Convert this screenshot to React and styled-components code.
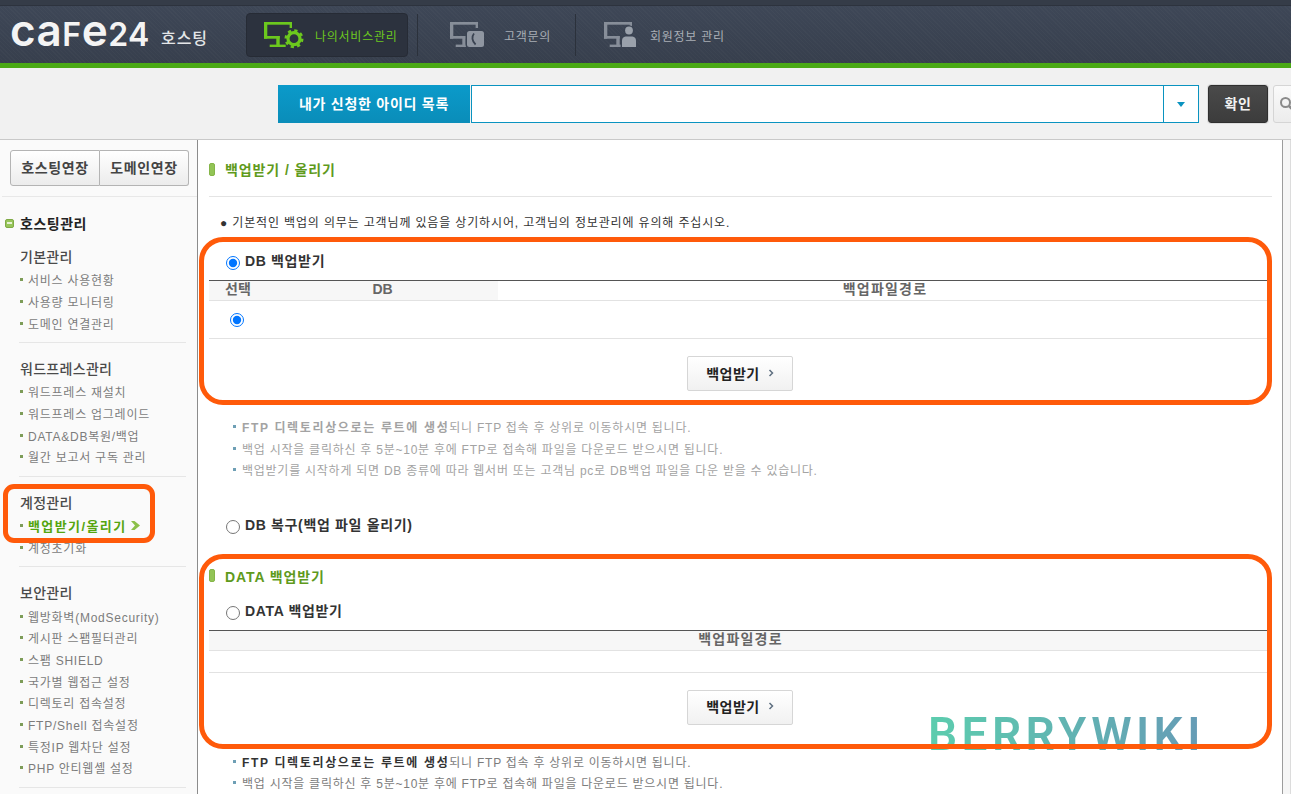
import React from 'react';
import styled, { createGlobalStyle } from 'styled-components';

const GlobalStyle = createGlobalStyle`
  html, body {
    margin: 0;
    height: 794px;
    overflow: hidden;
    background: #fff;
  }
  body {
    font-family: "Liberation Sans", "Noto Sans CJK KR", sans-serif;
    font-size: 12px;
    color: #333;
  }
  * { box-sizing: border-box; }
`;

const Page = styled.div`
  width: 1291px;
  height: 794px;
  overflow: hidden;
`;

/* top bar */
const Header = styled.header`
  display: flex;
  align-items: center;
  height: 68px;
  padding: 2px 0 0 10px;
  border-top: 5px solid #353c48;
  border-bottom: 5px solid #4aa914;
  background:
    repeating-linear-gradient(45deg, rgba(255,255,255,.018) 0 1px, transparent 1px 3px),
    linear-gradient(#3e4757, #373f4d);
  box-shadow: inset 0 1px 0 #2d333e;
`;

const Brand = styled.div`
  display: flex;
  align-items: center;
  width: 236px;
  color: #f4f4f4;
`;

const Logo = styled.span`
  font-family: Inter, sans-serif;
  font-weight: 600;
  font-size: 44px;
  line-height: 44px;
  letter-spacing: .5px;
  margin-top: -5px;
`;

const LogoCap = styled.span`
  font-size: 32px;
`;

const BrandSub = styled.span`
  margin: 3px 0 0 11px;
  font-size: 16px;
  font-weight: 500;
  letter-spacing: 1px;
  color: #e4e6e8;
`;

const NavItem = styled.a`
  display: flex;
  align-items: center;
  flex: none;
  width: ${p => p.$width}px;
  height: 44px;
  padding-left: ${p => p.$pad}px;
  gap: ${p => p.$gap}px;
  font-size: 12px;
  letter-spacing: .75px;
  color: ${p => (p.$active ? '#6cc81e' : '#a9aeb5')};
  ${p => p.$active && `
    background: #2c323e;
    border: 1px solid #262b35;
    border-radius: 4px;
  `}
`;

const NavSep = styled.div`
  flex: none;
  width: 1px;
  height: 42px;
  margin-left: ${p => p.$left || 0}px;
  background: #2b313b;
`;

const Monitor = ({ color }) => (
  <>
    <rect x="0" y="0" width="28" height="2.7" fill={color} />
    <rect x="25.6" y="0" width="2.4" height="6" fill={color} />
    <rect x="0" y="0" width="3.3" height="16.7" fill={color} />
    <rect x="0" y="14" width="15.7" height="2.7" fill={color} />
    <rect x="12.3" y="14" width="3.4" height="9" fill={color} />
    <rect x="5.7" y="22.6" width="16" height="2.4" fill={color} />
  </>
);

const GearIcon = () => (
  <svg width="40" height="27" viewBox="0 0 40 27">
    <Monitor color="#6cc81e" />
    <circle cx="30" cy="16.7" r="8.4" fill="#2c323e" />
    <circle cx="30" cy="16.7" r="6" fill="none" stroke="#6cc81e" strokeWidth="3.2" />
    <circle cx="30" cy="16.7" r="8.2" fill="none" stroke="#6cc81e" strokeWidth="2.6" strokeDasharray="3.2 3.24" />
  </svg>
);

const PhoneIcon = () => (
  <svg width="34" height="27" viewBox="0 0 34 27">
    <Monitor color="#878e99" />
    <rect x="15.6" y="7.6" width="19" height="18.4" rx="3" fill="#3a4352" />
    <rect x="17" y="9" width="17" height="16" rx="2.5" fill="#8f96a1" />
    <path d="M24 11.5c-2.4 3-2.2 7.5 1.6 11" fill="none" stroke="#3a4352" strokeWidth="1.8" />
  </svg>
);

const PersonIcon = () => (
  <svg width="33" height="27" viewBox="0 0 33 27">
    <Monitor color="#878e99" />
    <circle cx="25" cy="8.5" r="5.2" fill="#3a4352" />
    <rect x="16.6" y="13.6" width="17" height="12" fill="#3a4352" />
    <circle cx="25" cy="8.5" r="3.9" fill="#9aa1ab" />
    <path d="M18 25v-6.4c0-3 2.2-4.2 4.4-4.2h5.2c2.2 0 4.4 1.2 4.4 4.2V25z" fill="#9aa1ab" />
  </svg>
);

/* search band */
const SearchBand = styled.div`
  display: flex;
  align-items: stretch;
  height: 72px;
  padding: 17px 0 16px 278px;
  background: #f1f1f1;
  border-bottom: 1px solid #c9c9c9;
`;

const SearchLabel = styled.div`
  display: flex;
  align-items: center;
  justify-content: center;
  flex: none;
  width: 192px;
  padding-bottom: 2px;
  background: linear-gradient(#0b9aca, #0a8db9);
  color: #fff;
  font-size: 14px;
  font-weight: 700;
  letter-spacing: .75px;
`;

const SearchInput = styled.div`
  flex: none;
  width: 693px;
  margin-left: 1px;
  background: #fff;
  border: 1px solid #0a93c0;
`;

const SearchArrow = styled.div`
  display: flex;
  align-items: center;
  justify-content: center;
  flex: none;
  width: 35px;
  background: #fff;
  border: 1px solid #0a93c0;
  border-left: 0;
  &::after {
    content: '';
    border: 4px solid transparent;
    border-top: 5px solid #0a93c0;
    border-bottom: 0;
  }
`;

const ConfirmButton = styled.button`
  flex: none;
  width: 60px;
  margin-left: 9px;
  padding: 0 0 3px;
  background: linear-gradient(#4a4a4a, #3c3c3c);
  border: 1px solid #2f2f2f;
  border-radius: 3px;
  box-shadow: 0 0 0 1px #ddd;
  color: #f2f2f2;
  font: 700 14px "Liberation Sans", "Noto Sans CJK KR", sans-serif;
  letter-spacing: .6px;
`;

const SearchButton = styled.button`
  display: flex;
  align-items: center;
  flex: none;
  width: 50px;
  margin-left: 5px;
  padding: 0 0 0 5px;
  background: linear-gradient(#fafafa, #ececec);
  border: 1px solid #d5d5d5;
  border-radius: 3px;
`;

/* body */
const Body = styled.div`
  display: flex;
  height: 654px;
  overflow: hidden;
`;

const Sidebar = styled.aside`
  flex: none;
  width: 198px;
  background: #fafafa;
  border-right: 1px solid #8c8c8c;
`;

const RenewRow = styled.div`
  display: flex;
  height: 57px;
  margin-left: 2px;
  padding: 10px 8px 10px 8px;
  border-bottom: 1px solid #e8e8e8;
`;

const RenewButton = styled.button`
  width: ${p => p.$width}px;
  height: 36px;
  padding: 0 0 2px;
  background: linear-gradient(#fff, #ececec);
  border: 1px solid #b4b4b4;
  border-left-width: ${p => (p.$last ? 0 : 1)}px;
  border-radius: ${p => (p.$last ? '0 3px 3px 0' : '3px 0 0 3px')};
  color: #444;
  font: 700 14px "Liberation Sans", "Noto Sans CJK KR", sans-serif;
  letter-spacing: .6px;
`;

const SideHead = styled.div`
  display: flex;
  align-items: center;
  gap: 6px;
  height: 18px;
  margin: 17px 0 0 5px;
  color: #222;
  font-size: 14px;
  font-weight: 700;
  letter-spacing: .5px;
`;

const MinusIcon = styled.span`
  position: relative;
  flex: none;
  width: 9px;
  height: 9px;
  background: #97c55a;
  border: 1px solid #7faa45;
  border-radius: 2px;
  &::after {
    content: '';
    position: absolute;
    left: 1px;
    right: 1px;
    top: 2px;
    height: 2px;
    background: #e6f2d4;
  }
`;

const Group = styled.section`
  position: relative;
  margin: 0 11px 0 19px;
  padding: 13px 0 8px;
  border-bottom: 1px solid #e6e6e6;
  & + & { padding-top: 14px; }
`;

const GroupTitle = styled.h3`
  height: 24px;
  margin: 0 0 0 1px;
  color: #4a4a4a;
  font-size: 14px;
  font-weight: 500;
  line-height: 24px;
  letter-spacing: .3px;
`;

const SideList = styled.ul`
  margin: 0;
  padding: 0;
  list-style: none;
`;

const SideItem = styled.li`
  display: flex;
  align-items: center;
  height: 21.7px;
  padding-left: 1px;
  color: ${p => (p.$active ? '#55a50f' : '#7c7c7c')};
  font-weight: ${p => (p.$active ? 700 : 400)};
  font-size: ${p => (p.$active ? 13 : 12)}px;
  letter-spacing: ${p => (p.$active ? '1.4px' : '.75px')};
  &::before {
    content: '';
    flex: none;
    width: 3px;
    height: 3px;
    margin-right: 5px;
    background: #7d9c58;
  }
`;

const ActiveArrow = styled.svg`
  margin-left: 4px;
`;

const Highlight = styled.div`
  position: absolute;
  left: -16px;
  top: 7px;
  width: 152px;
  height: 59px;
  border: 5px solid #ff5a0a;
  border-radius: 11px;
`;

const Content = styled.main`
  flex: 1;
  isolation: isolate;
  background: #fff;
`;

const PageTitle = styled.div`
  display: flex;
  align-items: center;
  height: 57px;
  margin: 0 10px 0 11px;
  padding-top: 2px;
  border-bottom: 1px solid #e4e4e4;
`;

const TitleMark = styled.span`
  flex: none;
  width: 6px;
  height: 13px;
  margin-right: ${p => p.$gap}px;
  background: #92c456;
  border: 1px solid #85b548;
  border-radius: 2px;
`;

const GreenTitle = styled.h2`
  margin: 0;
  color: #5f9a1c;
  font-size: 14px;
  font-weight: 700;
  letter-spacing: .9px;
`;

const Notice = styled.p`
  height: 40px;
  margin: 0 0 0 22px;
  padding-top: 18px;
  color: #333;
  font-size: 12px;
  line-height: 17px;
  letter-spacing: .85px;
`;

const AnnotatedBox = styled.section`
  position: relative;
  width: 1073px;
  margin: ${p => p.$top || 0}px 0 0 1px;
  border: 5px solid #ff5a0a;
  border-radius: 24px;
`;

const RadioRow = styled.label`
  display: flex;
  align-items: center;
  gap: 5px;
  height: ${p => p.$height || 38}px;
  margin-top: ${p => p.$top || 0}px;
  padding: 0 0 2px ${p => p.$left || 22}px;
  color: #333;
  font-size: 14px;
  font-weight: 700;
  letter-spacing: .65px;
`;

const Radio = styled.input.attrs({ type: 'radio' })`
  flex: none;
  width: 14px;
  height: 14px;
  margin: 6px 0 0;
  accent-color: #0075ff;
`;

const RowRadio = styled(Radio)`
  margin: 0;
`;

const BoxTitle = styled.div`
  display: flex;
  align-items: center;
  height: 34px;
  padding-left: 5px;
`;

const Table = styled.div`
  margin-left: 5px;
  border-top: 1px solid #555;
`;

const TableHead = styled.div`
  display: grid;
  grid-template-columns: ${p => p.$columns};
  height: 20px;
  border-bottom: 1px solid #e2e2e2;
  color: #666;
  font-size: 14px;
  font-weight: 700;
  line-height: 17px;
  text-align: center;
`;

const HeadCell = styled.div`
  padding-left: ${p => p.$left || 0}px;
  letter-spacing: ${p => p.$spacing || 0}px;
  background: ${p => (p.$shaded ? '#f7f7f7' : '#fff')};
`;

const TableRow = styled.div`
  display: flex;
  align-items: center;
  height: ${p => p.$height}px;
  padding-left: ${p => p.$left || 0}px;
  border-bottom: 1px solid #e2e2e2;
`;

const Actions = styled.div`
  display: flex;
  justify-content: center;
  padding: 17px 0 ${p => p.$bottom}px 9px;
`;

const BackupButton = styled.button`
  display: flex;
  align-items: center;
  justify-content: center;
  gap: 8px;
  width: 106px;
  height: 35px;
  padding: 0 0 2px;
  background: linear-gradient(#fff, #f1f1f1);
  border: 1px solid #d6d6d6;
  border-radius: 2px;
  color: #222;
  font: 700 14px "Liberation Sans", "Noto Sans CJK KR", sans-serif;
  letter-spacing: .5px;
`;

const NoteList = styled.ul`
  margin: 0;
  padding: ${p => p.$top}px 0 0 35px;
  list-style: none;
  font-size: 12px;
  letter-spacing: .75px;
  color: ${p => (p.$faded ? '#a3a3a3' : '#7c7c7c')};
`;

const Note = styled.li`
  display: flex;
  align-items: center;
  height: 21.5px;
  white-space: nowrap;
  &::before {
    content: '';
    flex: none;
    width: 3px;
    height: 3px;
    margin-right: 6px;
    background: #6e9fb5;
  }
  strong {
    color: ${p => (p.$faded ? '#a3a3a3' : '#333')};
    letter-spacing: 1.65px;
  }
`;

const Watermark = styled.div`
  position: absolute;
  z-index: -1;
  left: 724px;
  top: 148px;
  font-family: Roboto, sans-serif;
  font-size: 46px;
  font-weight: 600;
  line-height: 54px;
  letter-spacing: 4.4px;
  white-space: nowrap;
  background: linear-gradient(90deg, #5ccdae, #669bb6);
  -webkit-background-clip: text;
  background-clip: text;
  color: transparent;
`;

const Rail = styled.div`
  flex: none;
  width: 9px;
  background: #f6f6f6;
  border-left: 1px solid #9c9c9c;
  border-right: 1px solid #dcdcdc;
`;

const groups = [
  { title: '기본관리', items: ['서비스 사용현황', '사용량 모니터링', '도메인 연결관리'] },
  { title: '워드프레스관리', items: ['워드프레스 재설치', '워드프레스 업그레이드', 'DATA&DB복원/백업', '월간 보고서 구독 관리'] },
  { title: '계정관리', items: ['백업받기/올리기', '계정초기화'], active: '백업받기/올리기' },
  {
    title: '보안관리',
    items: ['웹방화벽(ModSecurity)', '게시판 스팸필터관리', '스팸 SHIELD', '국가별 웹접근 설정', '디렉토리 접속설정', 'FTP/Shell 접속설정', '특정IP 웹차단 설정', 'PHP 안티웹셸 설정'],
  },
];

const Notes = ({ faded, top, full }) => (
  <NoteList $faded={faded} $top={top}>
    <Note $faded={faded}><span><strong>FTP 디렉토리상으로는 루트에 생성</strong>되니 FTP 접속 후 상위로 이동하시면 됩니다.</span></Note>
    <Note>백업 시작을 클릭하신 후 5분~10분 후에 FTP로 접속해 파일을 다운로드 받으시면 됩니다.</Note>
    {full && <Note>백업받기를 시작하게 되면 DB 종류에 따라 웹서버 또는 고객님 pc로 DB백업 파일을 다운 받을 수 있습니다.</Note>}
  </NoteList>
);

const Backup = ({ bottom }) => (
  <Actions $bottom={bottom}>
    <BackupButton>
      백업받기
      <svg width="6" height="8" viewBox="0 0 6 8">
        <path d="M1.5 1l3 3-3 3" fill="none" stroke="#5f6f80" strokeWidth="1.5" />
      </svg>
    </BackupButton>
  </Actions>
);

export default function App() {
  return (
    <Page>
      <GlobalStyle />
      <Header>
        <Brand>
          <Logo>ca<LogoCap>F</LogoCap>e<LogoCap>24</LogoCap></Logo>
          <BrandSub>호스팅</BrandSub>
        </Brand>
        <NavItem $active $width={162} $pad={17} $gap={11}><GearIcon />나의서비스관리</NavItem>
        <NavSep $left={9} />
        <NavItem $width={157} $pad={32} $gap={20}><PhoneIcon />고객문의</NavItem>
        <NavSep />
        <NavItem $width={200} $pad={28} $gap={13}><PersonIcon />회원정보 관리</NavItem>
      </Header>

      <SearchBand>
        <SearchLabel>내가 신청한 아이디 목록</SearchLabel>
        <SearchInput />
        <SearchArrow />
        <ConfirmButton>확인</ConfirmButton>
        <SearchButton>
          <svg width="16" height="16" viewBox="0 0 16 16">
            <circle cx="6.5" cy="6.5" r="4.5" fill="none" stroke="#8a8a8a" strokeWidth="2" />
            <path d="M10 10l5 5" stroke="#8a8a8a" strokeWidth="2.5" />
          </svg>
        </SearchButton>
      </SearchBand>

      <Body>
        <Sidebar>
          <RenewRow>
            <RenewButton $width={90}>호스팅연장</RenewButton>
            <RenewButton $last $width={89}>도메인연장</RenewButton>
          </RenewRow>
          <SideHead><MinusIcon />호스팅관리</SideHead>
          {groups.map(group => (
            <Group key={group.title}>
              <GroupTitle>{group.title}</GroupTitle>
              <SideList>
                {group.items.map(item => (
                  <SideItem key={item} $active={item === group.active}>
                    {item}
                    {item === group.active && (
                      <ActiveArrow width="9" height="9" viewBox="0 0 9 9">
                        <path d="M0 0h3.5L9 4.5 3.5 9H0l4-4.5z" fill="#8cc04a" />
                      </ActiveArrow>
                    )}
                  </SideItem>
                ))}
              </SideList>
              {group.active && <Highlight />}
            </Group>
          ))}
        </Sidebar>

        <Content>
          <PageTitle>
            <TitleMark $gap={10} />
            <GreenTitle>백업받기 / 올리기</GreenTitle>
          </PageTitle>
          <Notice>● 기본적인 백업의 의무는 고객님께 있음을 상기하시어, 고객님의 정보관리에 유의해 주십시오.</Notice>

          <AnnotatedBox>
            <RadioRow>
              <Radio name="mode" defaultChecked />
              DB 백업받기
            </RadioRow>
            <Table>
              <TableHead $columns="58px 231px 1fr">
                <HeadCell $shaded>선택</HeadCell>
                <HeadCell $shaded>DB</HeadCell>
                <HeadCell $left={5} $spacing={1.2}>백업파일경로</HeadCell>
              </TableHead>
              <TableRow $height={38} $left={21}>
                <RowRadio name="db" defaultChecked />
              </TableRow>
            </Table>
            <Backup bottom={9} />
          </AnnotatedBox>

          <Notes faded full top={11} />

          <RadioRow $top={25} $left={28}>
            <Radio name="mode" />
            DB 복구(백업 파일 올리기)
          </RadioRow>

          <AnnotatedBox $top={10}>
            <BoxTitle>
              <TitleMark $gap={10} />
              <GreenTitle>DATA 백업받기</GreenTitle>
            </BoxTitle>
            <RadioRow $height={37}>
              <Radio name="mode" />
              DATA 백업받기
            </RadioRow>
            <Table>
              <TableHead $columns="1fr">
                <HeadCell $shaded $left={5} $spacing={1.2}>백업파일경로</HeadCell>
              </TableHead>
              <TableRow $height={22} />
            </Table>
            <Backup bottom={19} />
            <Watermark>BERRYWIKI</Watermark>
          </AnnotatedBox>

          <Notes top={2} />
        </Content>
        <Rail />
      </Body>
    </Page>
  );
}
